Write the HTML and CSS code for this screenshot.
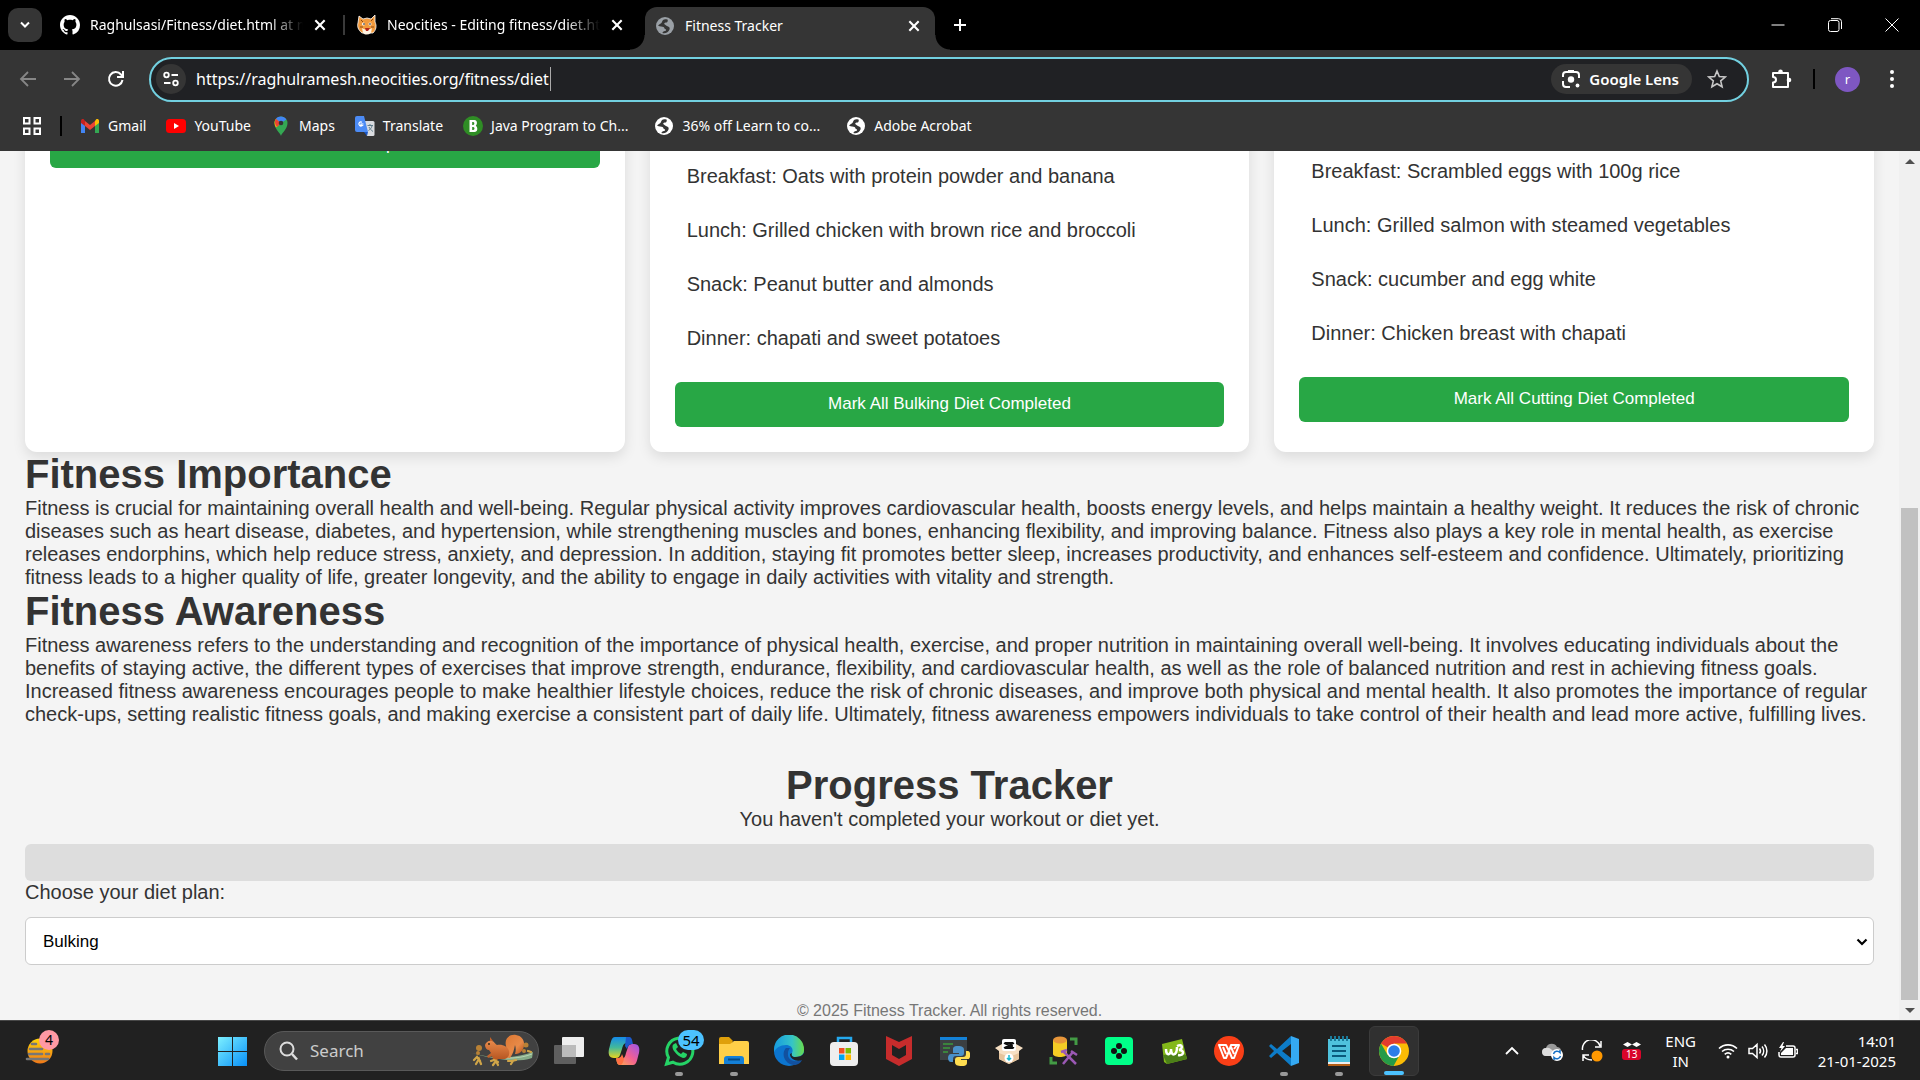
FILE: index.html
```html
<!DOCTYPE html>
<html lang="en">
<head>
<meta charset="utf-8">
<title>Fitness Tracker</title>
<link rel="stylesheet" href="styles.css">
</head>
<body>
<svg class="defs" aria-hidden="true">
  <symbol id="close" viewBox="0 0 12 12"><path d="M2 2l8 8M10 2l-8 8" stroke="currentColor" stroke-width="1.8" fill="none"/></symbol>
  <symbol id="globe" viewBox="0 0 20 20"><circle cx="10" cy="10" r="9" fill="currentColor"/><path d="M3 9.500c2 1.300 4.500.8 5.500 1.500 1.200.8.500 1.700 2 2.200 1 .3.800 1.500-.5 1.800-1.500.4-2.500 1-2.500 2 3 .8 6-.7 7-3.500.7-2-.5-2.800-2-3.200-1.500-.4-2-1.500-3-2-.7-.4 0-1.800 1.300-1.800 1.500 0 2-.8 2-2.800C9 2.500 7.500 4 7 6c-.5 1.800-2.500 1.600-4 3.500z" fill="#353535"/></symbol>
</svg>

<header class="browser">
  <div class="tabstrip">
    <button class="tab-search" aria-label="Search tabs"><svg width="14" height="14" viewBox="0 0 14 14"><path d="M3 4.500l4 4 4-4" stroke="#fff" stroke-width="2" fill="none"/></svg></button>
    <div class="tab tab-first">
      <svg width="20" height="20" viewBox="0 0 16 16"><path fill="#fff" d="M8 0C3.580 0 0 3.580 0 8c0 3.540 2.290 6.530 5.470 7.590.4.070.55-.17.55-.38 0-.19-.01-.82-.01-1.490-2.010.37-2.530-.49-2.690-.94-.09-.23-.48-.94-.82-1.130-.28-.15-.68-.52-.01-.53.63-.01 1.080.58 1.230.82.720 1.210 1.870.87 2.330.66.070-.52.280-.87.510-1.070-1.780-.2-3.640-.89-3.640-3.950 0-.87.310-1.590.82-2.150-.08-.2-.36-1.020.08-2.120 0 0 .67-.21 2.200.82.640-.18 1.320-.27 2-.27s1.360.09 2 .27c1.530-1.040 2.200-.82 2.200-.82.440 1.100.160 1.920.080 2.120.510.56.820 1.270.820 2.150 0 3.070-1.870 3.750-3.650 3.950.290.250.540.730.540 1.480 0 1.070-.01 1.930-.01 2.200 0 .21.150.46.550.38A8.010 8.010 0 0 0 16 8c0-4.420-3.580-8-8-8z"/></svg>
      <span class="tab-title">Raghulsasi/Fitness/diet.html at main</span>
      <button class="tab-close" aria-label="Close tab"><svg width="14" height="14"><use href="#close"/></svg></button>
    </div>
    <div class="tab tab-second">
      <svg width="20" height="20" viewBox="0 0 20 20"><path d="M2 1l4 3 4-1 4 1 4-4v7c2 4 1 8-2 11H5C1 15 0 11 1 8z" fill="#f29a3c" stroke="#fff" stroke-width=".8"/><path d="M5 13c3 2 7 2 10 0l-1 5c-3 2-6 2-8 0z" fill="#fff3e0"/><circle cx="6.500" cy="9" r="1.500" fill="#fff"/><circle cx="13" cy="9" r="1.500" fill="#fff"/><circle cx="7" cy="9" r=".8"/><circle cx="13" cy="9" r=".8"/><path d="M8 13h5l-2 3H9z" fill="#b3261e"/><path d="M4 5l2 2M14 6l2-2M3 12h3M14 12h3" stroke="#8b4a12"/></svg>
      <span class="tab-title">Neocities - Editing fitness/diet.html</span>
      <button class="tab-close" aria-label="Close tab"><svg width="14" height="14"><use href="#close"/></svg></button>
    </div>
    <div class="tab tab-active">
      <svg class="favicon-gray" width="20" height="20"><use href="#globe"/></svg>
      <span class="tab-title">Fitness Tracker</span>
      <button class="tab-close" aria-label="Close tab"><svg width="14" height="14"><use href="#close"/></svg></button>
    </div>
    <button class="new-tab" aria-label="New tab"><svg width="14" height="14" viewBox="0 0 14 14"><path d="M7 1v12M1 7h12" stroke="#fff" stroke-width="2"/></svg></button>
    <div class="window-controls">
      <button aria-label="Minimize"><svg width="14" height="14" viewBox="0 0 14 14"><path d="M0.500 7h13" stroke="#fff"/></svg></button>
      <button aria-label="Restore"><svg width="14" height="14" viewBox="0 0 14 14" fill="none" stroke="#fff"><rect x=".5" y="2.500" width="10.500" height="11" rx="2"/><path d="M3 .7h7.500a3 3 0 0 1 3 3V11"/></svg></button>
      <button aria-label="Close"><svg width="14" height="14" viewBox="0 0 14 14"><path d="M.5.5l13 13M13.500.5l-13 13" stroke="#fff"/></svg></button>
    </div>
  </div>

  <div class="toolbar">
    <div class="nav">
      <button aria-label="Back"><svg width="20" height="20" viewBox="0 0 20 20" fill="none" stroke="#868686" stroke-width="1.800"><path d="M18 10H3M10 3l-7 7 7 7"/></svg></button>
      <button aria-label="Forward"><svg width="20" height="20" viewBox="0 0 20 20" fill="none" stroke="#868686" stroke-width="1.800"><path d="M2 10h15M10 3l7 7-7 7"/></svg></button>
      <button aria-label="Reload"><svg width="20" height="20" viewBox="0 0 20 20" fill="none" stroke="#fff" stroke-width="2"><path d="M16.500 11a6.800 6.800 0 1 1-1.500-5.500l2 2"/><path d="M17 2v6h-6"/></svg></button>
    </div>
    <div class="omnibox">
      <button class="site-info" aria-label="View site information"><svg width="18" height="18" viewBox="0 0 18 18" fill="none" stroke="#fff" stroke-width="1.800"><circle cx="4.500" cy="5" r="2.300"/><path d="M9.500 5H16M2 13h6.500"/><circle cx="13.500" cy="13" r="2.300"/></svg></button>
      <span class="url" role="textbox" aria-label="Address">https://raghulramesh.neocities.org/fitness/diet</span>
      <button class="lens"><svg width="20" height="20" viewBox="0 0 20 20" fill="none" stroke="#fff" stroke-width="2"><path d="M2 8V6a3 3 0 0 1 3-3h10a3 3 0 0 1 3 3v3M2 12v3a3 3 0 0 0 3 3h4"/><path d="M7 2h6"/><circle cx="10" cy="10.500" r="3.200" fill="#fff" stroke="none"/><circle cx="16.500" cy="16.500" r="1.900" fill="#fff" stroke="none"/></svg>Google Lens</button>
      <button class="star" aria-label="Bookmark this tab"><svg width="20" height="20" viewBox="0 0 20 20" fill="none" stroke="#c7c7c7" stroke-width="1.600"><path d="M10 2l2.300 5.500 6 .5-4.600 3.900 1.400 5.900L10 14.700l-5.100 3.100 1.400-5.900L1.700 8l6-.5z"/></svg></button>
    </div>
    <button class="extensions" aria-label="Extensions"><svg width="22" height="22" viewBox="0 0 22 22"><path d="M3 5h15v14H3v-4.500c4 0 4-5.500 0-5.500z" fill="none" stroke="#fff" stroke-width="2" stroke-linejoin="round"/><circle cx="10.500" cy="3.700" r="2.300" fill="#fff"/><circle cx="19" cy="12" r="2.300" fill="#fff"/></svg></button>
    <span class="divider"></span>
    <button class="avatar" aria-label="Profile">r</button>
    <button class="menu" aria-label="Menu"><svg width="6" height="20" viewBox="0 0 6 20" fill="#fff"><circle cx="3" cy="3" r="2"/><circle cx="3" cy="10" r="2"/><circle cx="3" cy="17" r="2"/></svg></button>
  </div>

  <nav class="bookmarks" aria-label="Bookmarks">
    <button class="apps" aria-label="Apps"><svg width="18" height="18" viewBox="0 0 18 18" fill="none" stroke="#fff" stroke-width="2"><path d="M1 1h5.500v5.500H1zM11.500 1H17v5.500h-5.500zM1 11.500h5.500V17H1zM11.500 11.500H17V17h-5.500z"/></svg></button>
    <span class="divider"></span>
    <a href="#gmail"><svg width="20" height="20" viewBox="0 0 20 20"><path d="M1 5v12h4V8z" fill="#4285f4"/><path d="M19 5v12h-4V8z" fill="#34a853"/><path d="M15 5v5l4-3V5c0-2-2-2.500-3-1.500z" fill="#fbbc04"/><path d="M1 5v2l4 3V5L4 3.500C3 2.500 1 3 1 5z" fill="#c5221f"/><path d="M5 5v5l5 4 5-4V5l-5 4z" fill="#ea4335"/></svg>Gmail</a>
    <a href="#youtube"><svg width="20" height="20" viewBox="0 0 20 20"><rect x="0" y="3" width="20" height="14" rx="3.500" fill="#f00"/><path d="M8 7l5 3-5 3z" fill="#fff"/></svg>YouTube</a>
    <a href="#maps"><svg width="20" height="20" viewBox="0 0 20 20"><path d="M10 20c-.7-3-6.500-7-6.500-13A6.500 6.500 0 0 1 10 .5 6.500 6.500 0 0 1 16.500 7c0 6-5.800 10-6.500 13z" fill="#34a853"/><path d="M5 11.500C4 10 3.500 8.500 3.500 7c0-1.700.5-3 1.500-4.200L10 7z" fill="#fbbc04"/><path d="M5 2.800L10 7 6 11C4 9 3.200 5 5 2.800z" fill="#ea4335"/><path d="M5 2.800C7-.2 13-.6 15.500 3.500L10 7z" fill="#4285f4"/><circle cx="10" cy="7" r="2.300" fill="#333"/></svg>Maps</a>
    <a href="#translate"><svg width="20" height="20" viewBox="0 0 20 20"><path d="M8 5h10a1.500 1.500 0 0 1 1.500 1.500v12A1.500 1.500 0 0 1 18 20h-6z" fill="#dadce0"/><path d="M2 0h7l4 16H2a2 2 0 0 1-2-2V2a2 2 0 0 1 2-2z" fill="#4c8bf5"/><path d="M9 16h4l-1 4z" fill="#1a56c4"/><path d="M8.500 8H6v1.500h1.200A2 2 0 1 1 7 6.300" fill="none" stroke="#fff" stroke-width="1.200"/><path d="M12.500 9.500H18M15 8v1.500M17 10c-.5 2-2 3.500-3.500 4.500M14 11c1 2 2 3 4 4.500" stroke="#607d8b" fill="none"/></svg>Translate</a>
    <a class="wide" href="#java"><svg width="20" height="20" viewBox="0 0 20 20"><circle cx="10" cy="10" r="10" fill="#2f8d25"/><path fill="#fff" fill-rule="evenodd" d="M6.500 4h5c3 0 3 4.500 1.300 5.700C15 11 15 16 11.500 16h-5zM9.200 6v3h1c1.500 0 1.500-3 0-3zm0 5v3h1c1.700 0 1.700-3 0-3z"/></svg>Java Program to Ch...</a>
    <a class="wide" href="#learn"><svg width="20" height="20"><use href="#globe"/></svg>36% off Learn to co...</a>
    <a href="#acrobat"><svg width="20" height="20"><use href="#globe"/></svg>Adobe Acrobat</a>
  </nav>
</header>

<div class="viewport">
  <main class="page">
    <div class="plans">
      <section class="card">
        <button class="complete">Mark All Workout Completed</button>
      </section>
      <section class="card card-bulking">
        <ul>
          <li>Breakfast: Oats with protein powder and banana</li>
          <li>Lunch: Grilled chicken with brown rice and broccoli</li>
          <li>Snack: Peanut butter and almonds</li>
          <li>Dinner: chapati and sweet potatoes</li>
        </ul>
        <button class="complete">Mark All Bulking Diet Completed</button>
      </section>
      <section class="card card-cutting">
        <ul>
          <li>Breakfast: Scrambled eggs with 100g rice</li>
          <li>Lunch: Grilled salmon with steamed vegetables</li>
          <li>Snack: cucumber and egg white</li>
          <li>Dinner: Chicken breast with chapati</li>
        </ul>
        <button class="complete">Mark All Cutting Diet Completed</button>
      </section>
    </div>
    <h1>Fitness Importance</h1>
    <p>Fitness is crucial for maintaining overall health and well-being. Regular physical activity improves cardiovascular health, boosts energy levels, and helps maintain a healthy weight. It reduces the risk of chronic diseases such as heart disease, diabetes, and hypertension, while strengthening muscles and bones, enhancing flexibility, and improving balance. Fitness also plays a key role in mental health, as exercise releases endorphins, which help reduce stress, anxiety, and depression. In addition, staying fit promotes better sleep, increases productivity, and enhances self-esteem and confidence. Ultimately, prioritizing fitness leads to a higher quality of life, greater longevity, and the ability to engage in daily activities with vitality and strength.</p>
    <h1>Fitness Awareness</h1>
    <p>Fitness awareness refers to the understanding and recognition of the importance of physical health, exercise, and proper nutrition in maintaining overall well-being. It involves educating individuals about the benefits of staying active, the different types of exercises that improve strength, endurance, flexibility, and cardiovascular health, as well as the role of balanced nutrition and rest in achieving fitness goals. Increased fitness awareness encourages people to make healthier lifestyle choices, reduce the risk of chronic diseases, and improve both physical and mental health. It also promotes the importance of regular check-ups, setting realistic fitness goals, and making exercise a consistent part of daily life. Ultimately, fitness awareness empowers individuals to take control of their health and lead more active, fulfilling lives.</p>
    <section class="progress">
      <h1>Progress Tracker</h1>
      <p>You haven't completed your workout or diet yet.</p>
      <div class="progress-bar"></div>
    </section>
    <label for="plan">Choose your diet plan:</label>
    <div class="select">
      <select id="plan"><option>Bulking</option></select>
      <svg width="12" height="12" viewBox="0 0 12 12"><path d="M1.500 3.500L6 8l4.500-4.500" stroke="#000" stroke-width="2.200" fill="none"/></svg>
    </div>
    <footer>© 2025 Fitness Tracker. All rights reserved.</footer>
  </main>
  <div class="scrollbar">
    <svg width="20" height="20" viewBox="0 0 20 20"><path d="M5 13l5-5 5 5z" fill="#505050"/></svg>
    <span class="track"></span>
    <span class="thumb"></span>
    <svg width="20" height="20" viewBox="0 0 20 20"><path d="M5 8l5 5 5-5z" fill="#505050"/></svg>
  </div>
</div>

<div class="taskbar">
  <button class="widgets" aria-label="Widgets">
    <svg width="28" height="28" viewBox="0 0 28 28"><defs><linearGradient id="sun" x2="0" y2="1"><stop stop-color="#ffd50a"/><stop offset="1" stop-color="#f07818"/></linearGradient></defs><circle cx="15" cy="14" r="12.500" fill="url(#sun)"/><path d="M7 7h4M5 12h12M21 17h3M4 17h13M2 22h21" stroke="#777" stroke-width="2.600" stroke-linecap="round"/></svg>
    <span class="badge badge-pink">4</span>
  </button>
  <div class="dock">
    <button class="start" aria-label="Start"><svg width="30" height="30" viewBox="0 0 30 30"><defs><linearGradient id="win" x2="1" y2="1"><stop stop-color="#7df0ff"/><stop offset="1" stop-color="#0890f8"/></linearGradient></defs><path d="M0 1h14v14H0zM15 1h14v14H15zM0 16h14v14H0zM15 16h14v14H15z" fill="url(#win)"/></svg></button>
    <div class="search">
      <svg width="20" height="20" viewBox="0 0 20 20" fill="none" stroke="#ddd" stroke-width="2"><circle cx="8" cy="8" r="6.500"/><path d="M13 13l5 5.500" stroke-width="2.500"/></svg>
      <input type="text" placeholder="Search" aria-label="Search">
      <svg width="64" height="36" viewBox="0 0 64 36"><defs><linearGradient id="fur" x2="0" y2="1"><stop stop-color="#e8894a"/><stop offset="1" stop-color="#b4531f"/></linearGradient><linearGradient id="tail" x2="1" y2="1"><stop stop-color="#d9742f"/><stop offset=".6" stop-color="#e88a48"/><stop offset="1" stop-color="#a8430f"/></linearGradient></defs><path d="M1 20c18 5 38 7 61-1l-1 6c-9 3-20 3-29 1.500C20 25 10 23 1 20z" fill="#86ac88"/><path d="M22 23c12 3 26 3 39-2" stroke="#b9d4b4" fill="none"/><path d="M31 24c3-4 5-7 4-11-2-8 4-12 10-11 7 1 10 8 7 14-2 4-5 5-8 5 1-3 1-6 0-9-1 5-2 9-5 13z" fill="url(#tail)"/><path d="M14 12c1-3 4-5 7-4 2 0 3 3 5 4 6-1 11 2 12 6 1 4-1 7-4 8h-7c-1 2-4 2-5 0l-1-3-4 2-1-2 4-3-2-3c-2 0-4-2-4-5z" fill="url(#fur)"/><path d="M19 8l0-4 3 4z" fill="#c4622a"/><circle cx="18" cy="11" r=".9" fill="#221"/><g fill="#b98135"><circle cx="8" cy="15" r="3"/><circle cx="7" cy="20" r="2"/><circle cx="55" cy="12" r="2.500"/><circle cx="53" cy="18" r="2"/></g><path d="M3 27l3-3 3 4M5 31l3-5 2 5M20 28l3-1 4 2M22 32l3-4 2 4M37 28l4 0 4-1M40 31l2-3M57 18l3 1" stroke="#d0a548" stroke-width="2.200" stroke-linecap="round" fill="none"/></svg>
    </div>
    <button class="app" aria-label="Task view"><svg width="30" height="30" viewBox="0 0 30 30"><rect x="8" y="1" width="22" height="20" rx="1" fill="#eee"/><rect x="0" y="9" width="22" height="19" rx="1" fill="#666" opacity=".9"/><path d="M8 9h14v12H8z" fill="#bbb"/></svg></button>
    <button class="app" aria-label="Copilot"><svg width="32" height="32" viewBox="0 0 32 32"><defs><linearGradient id="cpa" x2="0" y2="1"><stop stop-color="#158bea"/><stop offset=".5" stop-color="#43b99a"/><stop offset="1" stop-color="#e8d520"/></linearGradient><linearGradient id="cpb" x1="1" x2="0" y2="1"><stop stop-color="#9a55eb"/><stop offset=".5" stop-color="#f26093"/><stop offset="1" stop-color="#ffb348"/></linearGradient></defs><path d="M7 2h13c3 0 3 3 4 6h-5c-3 0-4 2-5 6l-2 6c-1 3-3 3-6 3-5 0-6-4-5-9 2-6 2-12 6-12z" fill="url(#cpa)"/><path d="M25 30H12c-3 0-3-3-4-6h5c3 0 4-2 5-6l2-6c1-3 3-3 6-3 5 0 6 4 5 9-2 6-2 12-6 12z" fill="url(#cpb)"/><path d="M18 2h3c3 0 3 3 4 7-4 0-5 2-6 5l-2-3z" fill="#1b5acb"/><path d="M8 23c3 0 5 0 6-4l2 5c-1 4-2 5-3 6-4 0-4-3-5-7z" fill="#ff7043"/></svg></button>
    <button class="app running" aria-label="WhatsApp"><svg width="32" height="32" viewBox="0 0 32 32"><path d="M3.500 29l2-6.500A13 13 0 1 1 10 27.200z" fill="none" stroke="#25d366" stroke-width="3"/><path d="M11 9c-2 1-2 4 0 7 3 4 6 6 9 7 3 0 4-2 4-4l-4-2-2 2c-2-1-4-3-5-5l2-2-2-4z" fill="#25d366"/></svg><span class="badge badge-blue">54</span></button>
    <button class="app running" aria-label="File Explorer"><svg width="32" height="32" viewBox="0 0 32 32"><path d="M1 4a2 2 0 0 1 2-2h8l4 4-3 5H1z" fill="#dfa00b"/><path d="M1 9h11l4-3h13a2 2 0 0 1 2 2v21H1z" fill="#ffcf48"/><path d="M6 29v-5a3 3 0 0 1 3-3h14a3 3 0 0 1 3 3v5z" fill="#1480d8"/><path d="M10 24.500h12" stroke="#064b85" stroke-width="2"/></svg></button>
    <button class="app" aria-label="Edge"><svg width="32" height="32" viewBox="0 0 32 32"><defs><linearGradient id="ed" x2="1"><stop stop-color="#169be0"/><stop offset=".6" stop-color="#35c4c8"/><stop offset="1" stop-color="#68dc4c"/></linearGradient></defs><circle cx="16" cy="16" r="15" fill="#0c75cf"/><path d="M1 14A15 15 0 0 1 31 15c0 5-4 7-9 7-3 0-4-2-3-4 2-4-1-8-6-8-6 0-10 3-12 7z" fill="url(#ed)"/><path d="M13 13c-5 5-2 16 8 17 3 0 7-2 8-5-8 3-15 0-14-7 0-2 1-4 2-5z" fill="#12519f"/><path d="M19 18c-1 2 0 4 3 4 4 0 7-1 9-4v4l-2 3c-6 2-12-1-12-6z" fill="#212121"/></svg></button>
    <button class="app" aria-label="Microsoft Store"><svg width="32" height="32" viewBox="0 0 32 32"><path d="M10 8V3h13v5" fill="none" stroke="#24a9ee" stroke-width="2.500"/><rect x="2" y="7" width="28" height="24" rx="4" fill="#eee"/><path d="M11 13h5.500v5.500H11z" fill="#f25022"/><path d="M17.500 13H23v5.500h-5.500z" fill="#7fba00"/><path d="M11 19.500h5.500V25H11z" fill="#00a4ef"/><path d="M17.500 19.500H23V25h-5.500z" fill="#ffb900"/></svg></button>
    <button class="app" aria-label="McAfee"><svg width="32" height="32" viewBox="0 0 32 32"><path d="M3 1l13 6 13-6v23l-13 7-13-7zM9 10v10l7 4 7-4V10l-7 4z" fill="#c62c2c" fill-rule="evenodd"/></svg></button>
    <button class="app" aria-label="Python IDLE"><svg width="32" height="32" viewBox="0 0 32 32"><path d="M2 2h27v23H2z" fill="#3b3f42"/><path d="M2 2h27v3H2z" fill="#1482d8"/><path d="M5 9h10M5 13h7M5 17h5" stroke="#3c9a3c" stroke-width="1.500"/><path d="M20 11c-5 0-5 2-5 4v3h6v1h-8c-4 0-4 8 0 8h2v-3c0-2 1-3 3-3h5c2 0 3-1 3-3v-3c0-3-2-4-6-4z" fill="#4b91ca"/><path d="M24 31c5 0 5-2 5-4v-2h-6v-1h7c3 0 3-8 0-8h-2v3c0 2-1 3-3 3h-5c-2 0-3 1-3 3v2c0 3 2 4 7 4z" fill="#ffdd50"/></svg></button>
    <button class="app" aria-label="CapCut package"><svg width="32" height="32" viewBox="0 0 32 32"><path d="M2 13l7-4h14l7 4-4 3v8l-10 5-10-5v-8z" fill="#f6dfc3"/><path d="M6 18l10 4 10-4v6l-10 5-10-5z" fill="#e6c49c"/><rect x="9" y="4" width="14" height="12" rx="2" fill="#fff"/><path d="M11 8l10 5M11 13l10-5M12 8h7v5h-7" stroke="#111" stroke-width="1.800" fill="none"/><circle cx="16" cy="23" r="4.500" fill="#fff"/><path d="M16 20v5M14 23l2 2 2-2" stroke="#16b9cf" stroke-width="1.500" fill="none"/></svg></button>
    <button class="app" aria-label="Database tools"><svg width="32" height="32" viewBox="0 0 32 32"><path d="M5 5v14c0 4 14 4 14 0V5z" fill="#f5cc25"/><ellipse cx="12" cy="5" rx="7" ry="3.500" fill="#e8963a"/><path d="M22 4h6v6M3 22v6h6" fill="none" stroke="#439b45" stroke-width="3"/><path d="M15 29l10-12M16 17l12 12M13 17l6-2M23 16l6 4" stroke="#9a58b4" stroke-width="2.500"/></svg></button>
    <button class="app" aria-label="Clover app"><svg width="32" height="32" viewBox="0 0 32 32"><rect x="2" y="2" width="28" height="28" rx="4" fill="#0f8"/><g fill="#111"><circle cx="16" cy="11" r="3"/><circle cx="16" cy="21" r="3"/><circle cx="11" cy="16" r="3"/><circle cx="21" cy="16" r="3"/></g></svg></button>
    <button class="app" aria-label="W3 app"><svg width="32" height="32" viewBox="0 0 32 32"><path d="M4 9L24 4l5 20-20 5-3-2z" fill="#83b81a"/><path d="M5 20c8 0 16-4 23 0l1 4-20 5z" fill="#4c8018"/><path d="M8 14c0 8 5 6 5 0 0 8 6 7 6-2M19 11c6-3 6 3 2 4 6 0 5 6-1 5" stroke="#fff" stroke-width="2.500" fill="none"/></svg></button>
    <button class="app" aria-label="WPS Office"><svg width="32" height="32" viewBox="0 0 32 32"><circle cx="16" cy="16" r="15" fill="#fa3f17"/><path d="M6 10h7l3 6 2-6h8l-5 13h-2l-3-7-3 7h-2zM10 12l3 7M18 12l3 7M21 14l3-4" fill="none" stroke="#fff" stroke-width="2" stroke-linejoin="round"/></svg></button>
    <button class="app running" aria-label="Visual Studio Code"><svg width="32" height="32" viewBox="0 0 32 32"><path d="M23 1l8 3v24l-8 3z" fill="#35a9f2"/><path d="M23 1L9 14l-6-5-2 2 5 5-5 5 2 2 6-5 14 13v-8l-9-7 9-7z" fill="#0d7cc8"/></svg></button>
    <button class="app running" aria-label="Notepad"><svg width="32" height="32" viewBox="0 0 32 32"><path d="M5 4h22v25H5z" fill="#4fc2dd"/><path d="M5 27h22v2H5z" fill="#eee"/><path d="M5 29h22v2H5z" fill="#b45f16"/><path d="M9 11h14M9 16h14M9 21h14" stroke="#0a5a7c" stroke-width="2"/><path d="M8 1v5M12 1v5M16 1v5M20 1v5M24 1v5" stroke="#1a7b9b" stroke-width="2"/></svg></button>
    <button class="app current" aria-label="Chrome"><svg width="32" height="32" viewBox="0 0 32 32"><circle cx="16" cy="16" r="15" fill="#fbbc05"/><path d="M16 16L3 8.500A15 15 0 0 1 29 8.500H16z" fill="#e33b2e"/><path d="M3 8.500A15 15 0 0 0 15.500 31L22 19.500 16 16 9.500 19.700z" fill="#259b48"/><circle cx="16" cy="16" r="7.300" fill="#fff"/><circle cx="16" cy="16" r="5.800" fill="#2b7de9"/></svg></button>
  </div>
  <div class="tray">
    <button class="tray-icon" aria-label="Show hidden icons"><svg width="20" height="20" viewBox="0 0 20 20"><path d="M4 13l6-6 6 6" stroke="#fff" stroke-width="1.800" fill="none"/></svg></button>
    <button class="tray-icon" aria-label="OneDrive"><svg width="22" height="20" viewBox="0 0 22 20"><path d="M6 15a4 4 0 0 1-1-8c1-5 9-6 11-1 4 0 5 4 4 7z" fill="#999"/><path d="M5 15a4 4 0 0 1 0-8c3-1 5 1 7 3v5z" fill="#ddd"/><circle cx="16" cy="14" r="6" fill="#fff"/><path d="M12.500 13a3.800 3.800 0 0 1 6.500-1.500V9M19.500 15a3.800 3.800 0 0 1-6.500 1.500V19" stroke="#1670c4" stroke-width="1.500" fill="none"/></svg></button>
    <button class="tray-icon" aria-label="Update"><svg width="22" height="22" viewBox="0 0 22 22"><path d="M1.500 10A9 9 0 0 1 19 6M20 1v6h-6M2 21v-6h6M2 15c2 4 5 5 9 5" stroke="#fff" stroke-width="1.500" fill="none"/><circle cx="16" cy="16" r="5.500" fill="#ff9800"/></svg></button>
    <button class="tray-icon calendar" aria-label="Calendar"><svg width="18" height="5" viewBox="0 0 18 5" fill="#fff"><path d="M0 2.500L4.500 0 9 2.500 4.500 5zM9 2.500L13.500 0 18 2.500 13.500 5z"/></svg><span>13</span></button>
    <button class="language">ENG<br>IN</button>
    <div class="status">
      <svg width="20" height="20" viewBox="0 0 20 20" fill="none" stroke="#fff" stroke-width="1.600"><path d="M1 7.500a13 13 0 0 1 18 0M4 10.500a9 9 0 0 1 12 0M6.700 13.300a5 5 0 0 1 6.600 0"/><circle cx="10" cy="16" r="1.500" fill="#fff" stroke="none"/></svg>
      <svg width="20" height="20" viewBox="0 0 20 20" fill="none" stroke="#fff" stroke-width="1.500"><path d="M1 7.500h3.500L9 3.500v13l-4.500-4H1zM11.500 7.500a4 4 0 0 1 0 5M14 5.500a7 7 0 0 1 0 9M16.500 3.500a10 10 0 0 1 0 13"/></svg>
      <svg width="20" height="20" viewBox="0 0 20 20" fill="none" stroke="#fff" stroke-width="1.500"><path d="M8 5h7a2 2 0 0 1 2 2v7a2 2 0 0 1-2 2H3a2 2 0 0 1-2-2v-3M18 8.500h1.500v4H18"/><path d="M8 7h7v7H3v-2z" fill="#fff" stroke="none"/><path d="M5 1L1 7h2.500L2 11l5-6H4.500L6 1z" fill="#fff" stroke="none"/></svg>
    </div>
    <button class="clock">14:01<br>21-01-2025</button>
  </div>
</div>
</body>
</html>
```
FILE: styles.css
```css
* { box-sizing: border-box; margin: 0; padding: 0; }
html, body { height: 100%; }
body {
  display: flex;
  flex-direction: column;
  overflow: hidden;
  font-family: "Liberation Sans", Arial, sans-serif;
  font-size: 20px;
  line-height: 23px;
  color: #333;
  background: #f4f4f4;
}
button { border: 0; background: none; color: inherit; font: inherit; }
svg { flex: none; display: block; }
.defs { position: absolute; width: 0; height: 0; }

/* Browser chrome */
.browser {
  flex: none;
  font-family: "Noto Sans", sans-serif;
  font-size: 14px;
  line-height: 20px;
  color: #fff;
  background: #353535;
}
.browser button { display: flex; align-items: center; justify-content: center; }
.tabstrip { display: flex; align-items: center; height: 50px; padding-left: 8px; background: #000; }
.tab-search { width: 34px; height: 34px; border-radius: 10px; background: #353535; }
.tab { display: flex; align-items: center; gap: 10px; height: 20px; }
.tab-first { width: 285px; margin-left: 18px; padding-right: 16px; border-right: 2px solid #3a3a3a; }
.tab-second { width: 300px; padding: 0 21px 0 12px; }
.tab-title { flex: 1; min-width: 0; overflow: hidden; white-space: nowrap; }
.tab-first .tab-title, .tab-second .tab-title {
  -webkit-mask-image: linear-gradient(90deg, #000 84%, transparent);
  mask-image: linear-gradient(90deg, #000 84%, transparent);
}
.tab-close { width: 14px; height: 20px; }
.tab-active {
  position: relative;
  align-self: flex-end;
  width: 290px;
  height: 43px;
  padding: 0 14px 6px 10px;
  border-radius: 12px 12px 0 0;
  background: #353535;
}
.tab-active::before, .tab-active::after {
  content: "";
  position: absolute;
  bottom: 0;
  width: 15px;
  height: 15px;
}
.tab-active::before { left: -15px; background: radial-gradient(circle at 0 0, #000 14px, #353535 15px); }
.tab-active::after { right: -15px; background: radial-gradient(circle at 100% 0, #000 14px, #353535 15px); }
.favicon-gray { color: #9aa0a6; }
.new-tab { width: 50px; height: 34px; }
.window-controls { display: flex; margin-left: auto; }
.window-controls button { width: 57px; height: 50px; }

.toolbar { display: flex; align-items: center; height: 60px; padding: 0 9px 2px 6px; }
.nav { display: flex; }
.nav button { width: 44px; height: 34px; }
.omnibox {
  display: flex;
  align-items: center;
  flex: 1;
  height: 45px;
  margin-left: 11px;
  padding: 0 20px 0 5px;
  border: 2px solid #72d0e0;
  border-radius: 23px;
  background: #202124;
}
.omnibox .site-info { width: 30px; height: 30px; border-radius: 15px; background: #353535; }
.url { margin-left: 10px; padding-right: 1px; border-right: 1px solid #aaa; font-size: 16px; line-height: 24px; white-space: nowrap; }
.browser .lens {
  gap: 8px;
  height: 30px;
  margin-left: auto;
  padding: 0 13px 0 10px;
  border-radius: 15px;
  font-size: 15px;
  font-weight: 600;
  background: #353535;
}
.star { margin-left: 15px; }
.extensions { width: 64px; }
.divider { width: 2px; height: 20px; background: #000; }
.browser .avatar { width: 25px; height: 25px; margin: 0 13px 0 20px; border-radius: 13px; font-size: 13px; background: #7e57c2; }
.menu { width: 38px; }

.bookmarks { display: flex; align-items: center; height: 41px; padding: 0 23px 9px; }
.bookmarks .divider { margin: 0 18px 0 19px; }
.bookmarks a { display: flex; align-items: center; gap: 8px; margin-right: 20px; color: #fff; text-decoration: none; white-space: nowrap; }
.bookmarks .wide { margin-right: 26px; }

/* Page area */
.viewport { display: flex; flex: 1; min-height: 0; overflow: hidden; }
.page { display: flex; flex: 1; min-width: 0; flex-direction: column; justify-content: flex-end; padding: 0 25px; overflow: hidden; }
.page > * { flex: none; }
.plans { display: grid; grid-template-columns: repeat(3, 1fr); gap: 25px; }
.card { padding: 25px; border-radius: 12px; background: #fff; box-shadow: 0 5px 13px rgba(0, 0, 0, .1); }
.card-bulking { padding-top: 55px; }
.card-cutting { padding-top: 50px; }
.card ul { margin-bottom: 20px; list-style: none; }
.card li { padding: 12px; }
.card li + li { margin-top: 7px; }
.complete { width: 100%; height: 45px; padding-bottom: 2px; border-radius: 6px; font-size: 17px; color: #fff; background: #28a745; }
.page .complete { display: block; }
h1 { font-size: 40px; line-height: 45px; }
.progress { margin-top: 37px; text-align: center; }
.progress-bar { height: 37px; margin-top: 13px; border-radius: 6px; background: #ddd; }
.select { position: relative; margin-top: 13px; }
select {
  display: block;
  width: 100%;
  height: 48px;
  padding: 0 17px;
  border: 1px solid #ccc;
  border-radius: 6px;
  appearance: none;
  font: 17px "Liberation Sans", Arial, sans-serif;
  color: #000;
  background: #fff;
}
.select svg { position: absolute; right: 6px; top: 19px; pointer-events: none; }
footer { margin-top: 36px; font-size: 16px; line-height: 19px; text-align: center; color: #777; }
.scrollbar { display: flex; flex-direction: column; align-items: center; width: 21px; background: #f0f0f0; }
.track { flex: 336; }
.thumb { flex: 491; width: 17px; background: #c1c1c1; }

/* Taskbar */
.taskbar {
  display: flex;
  flex: none;
  align-items: center;
  height: 60px;
  border-top: 1px solid #484848;
  font-family: "Noto Sans", sans-serif;
  font-size: 15px;
  line-height: 20px;
  color: #fff;
  background: #212121;
}
.widgets { position: relative; margin-left: 25px; }
.badge { position: absolute; height: 20px; border-radius: 10px; text-align: center; color: #000; }
.badge-pink { left: 14px; top: -7px; width: 20px; font-size: 14px; background: #ff99a4; }
.badge-blue { left: 27px; top: 4px; width: 26px; background: #4cc2ff; }
.dock { display: flex; align-items: center; margin-left: 165px; }
.search {
  display: flex;
  align-items: center;
  width: 275px;
  height: 40px;
  margin: 0 2px 0 16px;
  padding: 0 3px 0 14px;
  border: 1px solid #595959;
  border-radius: 20px;
  background: #414141;
}
.search input { flex: 1; min-width: 0; margin-left: 11px; border: 0; outline: 0; font: 17px "Noto Sans", sans-serif; background: none; }
.search input::placeholder { color: #ccc; }
.app { position: relative; display: flex; align-items: center; justify-content: center; width: 55px; height: 50px; }
.running::after, .current::after { content: ""; position: absolute; bottom: 0; width: 8px; height: 4px; border-radius: 2px; background: #999; }
.current { width: 50px; margin-left: 3px; border: 1px solid #3b3b3b; border-radius: 6px; background: #303030; }
.current::after { width: 20px; background: #4cc2ff; }
.tray { display: flex; align-items: center; margin-left: auto; padding-right: 24px; }
.tray-icon { display: flex; align-items: center; justify-content: center; width: 40px; height: 50px; }
.calendar { flex-direction: column; gap: 2px; }
.calendar span { width: 19px; border-radius: 3px; font-size: 10px; line-height: 11px; background: #d9052a; }
.language { width: 58px; }
.status { display: flex; gap: 10px; margin-left: 8px; }
.clock { margin-left: 20px; text-align: right; }
```
